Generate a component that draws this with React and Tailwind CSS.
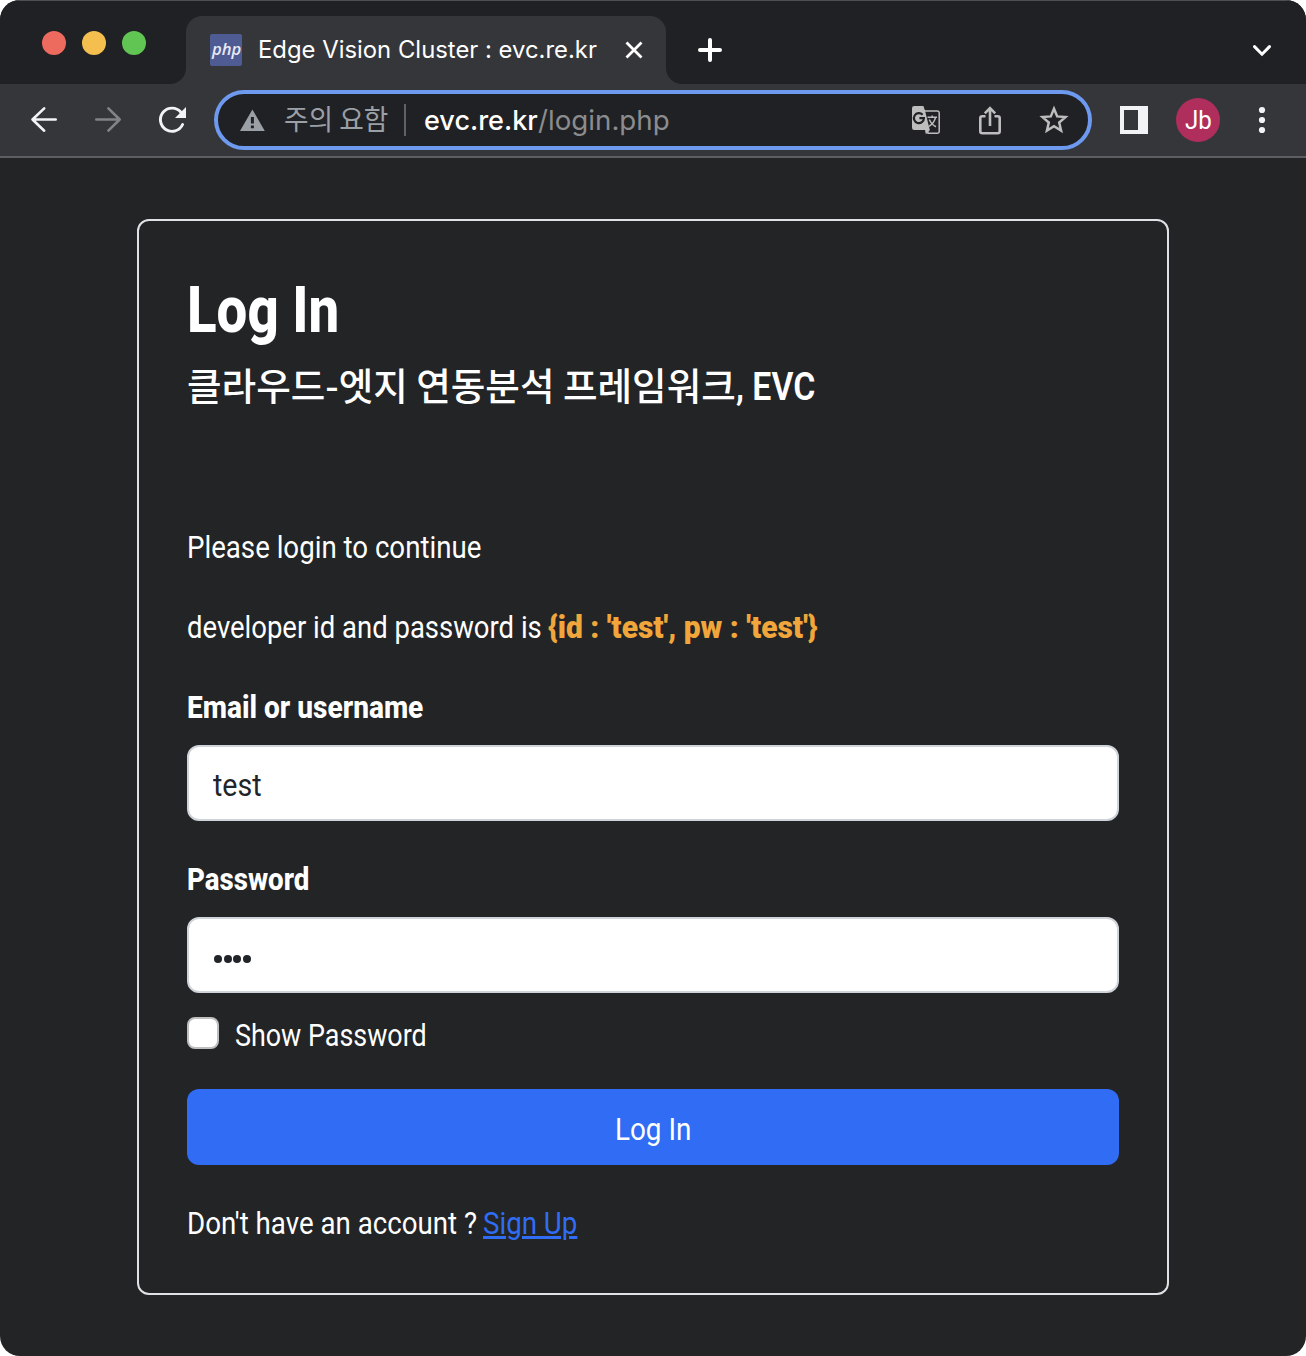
import { useLayoutEffect, useRef, useState } from "react";

/* Single-line text condensed horizontally to a given width. */
function Fit({ w, className = "", children }) {
  const ref = useRef(null);
  const [k, setK] = useState(1);
  useLayoutEffect(() => {
    if (ref.current) setK(w / ref.current.offsetWidth);
  }, [w]);
  return (
    <span className="inline-block shrink-0 whitespace-nowrap" style={{ width: w }}>
      <span
        ref={ref}
        className={`inline-block origin-left whitespace-nowrap ${className}`}
        style={{ transform: `scaleX(${k})` }}
      >
        {children}
      </span>
    </span>
  );
}

function TabStrip() {
  return (
    <div className="flex h-[84px] border-t border-[#4d4f51] bg-[#202124] pt-[15px]">
      <div className="flex w-[170px] gap-4 pl-[42px] pt-[15px]">
        <span className="size-6 rounded-full bg-[#ed6a5e]" />
        <span className="size-6 rounded-full bg-[#f5bf4f]" />
        <span className="size-6 rounded-full bg-[#61c554]" />
      </div>
      <svg className="mt-[52px] size-4 text-[#35363a]" viewBox="0 0 16 16" fill="currentColor">
        <path d="M16 0v16H0A16 16 0 0 0 16 0z" />
      </svg>
      <div className="flex h-[68px] w-[480px] items-center rounded-t-2xl bg-[#35363a] pl-6 text-white">
        <span className="flex size-8 items-center justify-center rounded-[2px] bg-[#4f5b93] pb-0.5">
          <Fit w={29} className="font-['Open_Sans',sans-serif] text-[16px] font-semibold italic leading-none text-[#e8e9f2]">
            php
          </Fit>
        </span>
        <span className="ml-4 flex">
          <Fit w={339} className="font-[Inter,sans-serif] text-[24px] leading-8">
            Edge Vision Cluster : evc.re.kr
          </Fit>
        </span>
        <svg className="ml-[25px] size-6" viewBox="0 0 24 24" fill="none" stroke="currentColor" strokeWidth="2.8">
          <path d="M4.5 4.5l15 15M19.5 4.5l-15 15" />
        </svg>
      </div>
      <svg className="mt-[52px] size-4 text-[#35363a]" viewBox="0 0 16 16" fill="currentColor">
        <path d="M0 0v16h16A16 16 0 0 1 0 0z" />
      </svg>
      <svg className="ml-3 mt-[18px] size-8 text-white" viewBox="0 0 32 32" fill="none" stroke="currentColor" strokeWidth="4" strokeLinecap="round">
        <path d="M16 6v20M6 16h20" />
      </svg>
      <svg className="ml-auto mr-7 mt-[18px] size-8 text-white" viewBox="0 0 32 32" fill="none" stroke="currentColor" strokeWidth="3" strokeLinecap="round">
        <path d="M8.5 12.6l7.5 7.6 7.5-7.6" />
      </svg>
    </div>
  );
}

function Omnibox() {
  return (
    <div className="ml-[26px] flex h-[60px] w-[878px] items-center rounded-full border-4 border-[#6d99ef] bg-[#202124] pl-5 pr-[18px]">
      <svg className="size-7 text-[#9aa0a6]" viewBox="0 0 28 28" fill="currentColor" fillRule="evenodd">
        <path d="M14.4 3.6L26.8 25H2zM12.9 11h3v6.4h-3zM12.9 19.4h3v2.8h-3z" />
      </svg>
      <span className="ml-[18px] flex -translate-y-px">
        <Fit w={104} className="font-['Noto_Sans_CJK_KR',sans-serif] text-[28px] leading-8 text-[#9aa0a6]">
          주의 요함
        </Fit>
      </span>
      <span className="ml-4 h-8 w-0.5 bg-[#5f6368]" />
      <span className="ml-[18px] flex font-[Inter,sans-serif] text-[27.5px] leading-8">
        <Fit w={114} className="font-medium text-white">
          evc.re.kr
        </Fit>
        <Fit w={132} className="text-[#8b8c8e]">
          /login.php
        </Fit>
      </span>
      <div className="ml-auto flex gap-8 text-[#bdbdbd]">
        <svg className="size-8" viewBox="0 0 32 32" fill="none">
          <path d="M14 7h13.4a1.8 1.8 0 0 1 1.8 1.8v18.6a1.8 1.8 0 0 1-1.8 1.8H18z" stroke="currentColor" strokeWidth="1.5" />
          <path d="M4.2 2h9.2l1.4 4 5 20H4.2a2.2 2.2 0 0 1-2.2-2.2V4.2A2.2 2.2 0 0 1 4.2 2z" fill="currentColor" />
          <path d="M15 26h5l-4.2 4.2z" fill="currentColor" />
          <path d="M12.6 10.8A5 5 0 1 0 13.9 14.2H9.4" stroke="#202124" strokeWidth="2.2" />
          <path d="M17.5 13.3h9.5M22.2 11.5v1.8M25.5 13.3c-.8 4-3.5 7-6.5 9M19.3 15.5c1.5 3.5 4 6 6.7 7.3" stroke="currentColor" strokeWidth="1.5" />
        </svg>
        <svg className="size-8" viewBox="0 0 32 32" fill="none" stroke="currentColor" strokeWidth="2.6">
          <path d="M11.5 12.3H8.3a2 2 0 0 0-2 2v13a2 2 0 0 0 2 2h15.4a2 2 0 0 0 2-2v-13a2 2 0 0 0-2-2h-3.2M16 22V4.5M10.8 9.3L16 4.1l5.2 5.2" />
        </svg>
        <svg className="size-8" viewBox="0 0 32 32" fill="none" stroke="currentColor" strokeWidth="2.5">
          <path d="M16 4.8l3.2 7.6 8.3.7-6.3 5.4 1.9 8.1L16 22.3l-7.1 4.3 1.9-8.1-6.3-5.4 8.3-.7z" />
        </svg>
      </div>
    </div>
  );
}

function Toolbar() {
  return (
    <div className="flex h-[74px] items-center border-b-2 border-[#5e5f62] bg-[#35363a] pl-7 text-[#f1f3f4]">
      <svg className="size-8" viewBox="0 0 32 32" fill="none" stroke="currentColor" strokeWidth="2.6" strokeLinecap="round" strokeLinejoin="round">
        <path d="M27.7 15.5H4.5M16.2 4.4L4.5 15.5l11.7 11.2" />
      </svg>
      <svg className="ml-8 size-8 text-[#828386]" viewBox="0 0 32 32" fill="none" stroke="currentColor" strokeWidth="2.6" strokeLinecap="round" strokeLinejoin="round">
        <path d="M4.3 15.5h23.2M16.4 4.4l11.3 11.1-11.3 11.2" />
      </svg>
      <svg className="ml-8 size-8" viewBox="0 0 32 32" fill="none">
        <path d="M26.6 20.5A11.6 11.6 0 1 1 24.9 8.2" stroke="currentColor" strokeWidth="2.9" strokeLinecap="round" />
        <path d="M30 3v11H19z" fill="currentColor" />
      </svg>
      <Omnibox />
      <span className="ml-7 size-7 border-y-4 border-l-4 border-r-[10px] border-[#f1f3f4]" />
      <span className="ml-7 flex size-11 items-center justify-center rounded-full bg-[#b02e5b] pt-[3px]">
        <Fit w={27} className="font-[Roboto,sans-serif] text-[25px] leading-none text-white">
          Jb
        </Fit>
      </span>
      <svg className="ml-[26px] size-8" viewBox="0 0 32 32" fill="currentColor">
        <circle cx="16" cy="6" r="3.1" />
        <circle cx="16" cy="16" r="3.1" />
        <circle cx="16" cy="26" r="3.1" />
      </svg>
    </div>
  );
}

function LoginCard() {
  return (
    <form className="mx-auto mt-[61px] flex h-[1076px] w-[1032px] flex-col rounded-xl border-2 border-[#dee2e6] px-12 pt-[50px] font-[Roboto,sans-serif] text-[31.5px] leading-[48px] text-white">
      <h1 className="flex h-[82px] items-center">
        <Fit w={152} className="text-[64px] font-extrabold leading-none">Log In</Fit>
      </h1>
      <h2 className="mt-0.5 flex h-[65px] items-baseline text-[39.4px] font-semibold leading-[57px]">
        <Fit w={549} className="font-['Noto_Sans_CJK_KR',sans-serif] text-[37.5px] font-medium">
          클라우드-엣지 연동분석 프레임워크
        </Fit>
        <Fit w={79}>, EVC</Fit>
      </h2>
      <p className="mt-[104px] flex h-12">
        <Fit w={294}>Please login to continue</Fit>
      </p>
      <p className="mt-8 flex h-12 gap-[6px]">
        <Fit w={355}>developer id and password is</Fit>
        <Fit w={270} className="font-black text-[#f0a63a]">{"{id : 'test', pw : 'test'}"}</Fit>
      </p>
      <label className="mt-8 flex h-12">
        <Fit w={236} className="font-extrabold">Email or username</Fit>
      </label>
      <div className="mt-[13px] flex h-[76px] items-center rounded-xl border-2 border-[#ced4da] bg-white pl-6 pt-[6px] text-[#212529]">
        <Fit w={49}>test</Fit>
      </div>
      <label className="mt-[35px] flex h-12">
        <Fit w={122} className="font-extrabold">Password</Fit>
      </label>
      <div className="mt-[13px] flex h-[76px] items-center gap-[1.7px] rounded-xl border-2 border-[#ced4da] bg-white pl-[25px] pt-2 text-[#212529]">
        <span className="size-2 rounded-full bg-[#212529]" />
        <span className="size-2 rounded-full bg-[#212529]" />
        <span className="size-2 rounded-full bg-[#212529]" />
        <span className="size-2 rounded-full bg-[#212529]" />
      </div>
      <div className="mt-[19px] flex h-12">
        <span className="mr-4 mt-[5px] size-8 rounded-lg border-2 border-[#bfbfbf] bg-white" />
        <Fit w={192}>Show Password</Fit>
      </div>
      <button type="button" className="mt-[29px] flex h-[76px] items-center justify-center rounded-xl bg-[#316cf4] pt-[6px]">
        <Fit w={76}>Log In</Fit>
      </button>
      <p className="mt-[35px] flex h-12 gap-[6px]">
        <Fit w={290}>Don't have an account ?</Fit>
        <Fit w={94} className="text-[#316cf4] underline decoration-[3px] underline-offset-2">Sign Up</Fit>
      </p>
    </form>
  );
}

export default function App() {
  return (
    <div className="h-[1356px] w-[1306px] bg-white">
      <div className="h-full w-full overflow-hidden rounded-[20px] bg-[#222426]">
        <TabStrip />
        <Toolbar />
        <LoginCard />
      </div>
    </div>
  );
}
